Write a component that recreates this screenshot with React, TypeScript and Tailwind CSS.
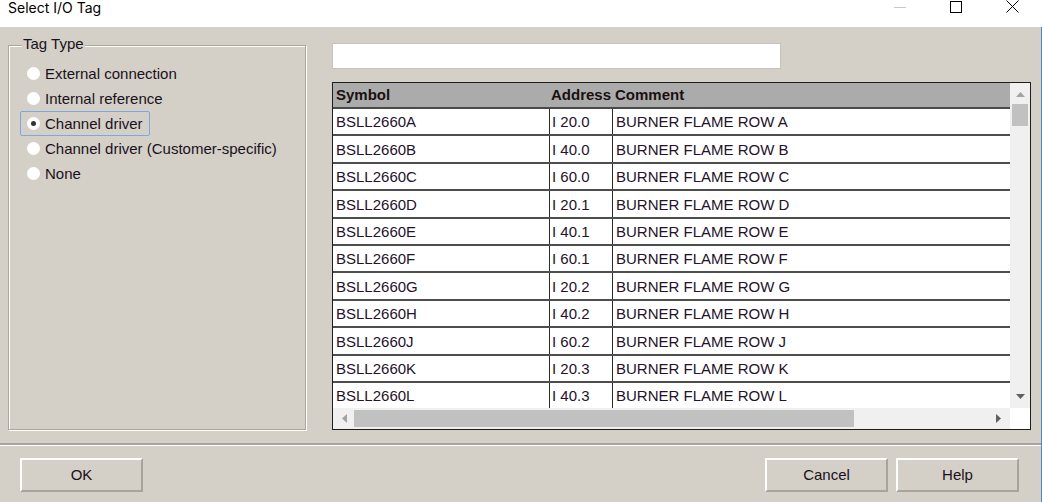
import React from "react";

const tagTypes = [
    "External connection",
    "Internal reference",
    "Channel driver",
    "Channel driver (Customer-specific)",
    "None",
];

const rows = [
    ["BSLL2660A", "I 20.0", "BURNER FLAME ROW A"],
    ["BSLL2660B", "I 40.0", "BURNER FLAME ROW B"],
    ["BSLL2660C", "I 60.0", "BURNER FLAME ROW C"],
    ["BSLL2660D", "I 20.1", "BURNER FLAME ROW D"],
    ["BSLL2660E", "I 40.1", "BURNER FLAME ROW E"],
    ["BSLL2660F", "I 60.1", "BURNER FLAME ROW F"],
    ["BSLL2660G", "I 20.2", "BURNER FLAME ROW G"],
    ["BSLL2660H", "I 40.2", "BURNER FLAME ROW H"],
    ["BSLL2660J", "I 60.2", "BURNER FLAME ROW J"],
    ["BSLL2660K", "I 20.3", "BURNER FLAME ROW K"],
    ["BSLL2660L", "I 40.3", "BURNER FLAME ROW L"],
];

const Button: React.FC<{ label: string }> = ({ label }) => (
    <button className="w-[123px] h-[34px] bg-[#d4d0c8] border-2 border-t-white border-l-white border-b-[#a8a49c] border-r-[#a8a49c] text-[15px] text-[#1a1020] flex items-center justify-center">
        {label}
    </button>
);

const App: React.FC = () => {
    const selected = 2;

    return (
        <div className="w-[1042px] h-[502px] overflow-hidden bg-white font-['Liberation_Sans',Arial,sans-serif]">

            {/* Title bar */}
            <div className="h-[27px] bg-white flex items-start">
                <span className="pl-[8px] text-[14px] leading-[16px] text-black font-['Inter',sans-serif]">Select I/O Tag</span>
                <div className="flex-1" />
                <div className="flex items-start pr-[2px]">
                    <div className="w-[56px] h-[13px] flex items-center justify-center">
                        <svg width="12" height="12" viewBox="0 0 12 12">
                            <line x1="0" y1="6.5" x2="12" y2="6.5" stroke="#c8c8c8" strokeWidth="1" />
                        </svg>
                    </div>
                    <div className="w-[56px] h-[13px] flex items-center justify-center">
                        <svg width="12" height="12" viewBox="0 0 12 12">
                            <rect x="0.5" y="0.5" width="11" height="11" fill="none" stroke="#000" strokeWidth="1" />
                        </svg>
                    </div>
                    <div className="w-[56px] h-[13px] flex items-center justify-center">
                        <svg width="13" height="13" viewBox="0 0 13 13">
                            <path d="M0.5 0.5 L12.5 12.5 M12.5 0.5 L0.5 12.5" stroke="#000" strokeWidth="1" />
                        </svg>
                    </div>
                </div>
            </div>

            {/* Body */}
            <div className="h-[475px] bg-[#d4d0c8] border-r border-[#4a8ac4] flex flex-col">

                <div className="flex h-[416px]">

                    {/* Tag Type group */}
                    <div className="relative ml-[8px] mt-[18px] w-[298px] h-[385px] border border-[#aca899] shadow-[1px_1px_0_#fff,inset_1px_1px_0_#fff]">
                        <span className="absolute left-[13px] top-[-11px] px-[1px] bg-[#d4d0c8] text-[15px] leading-[17px] text-[#1a1020]">Tag Type</span>

                        <div className="mt-[15px] ml-[11px] flex flex-col items-start">
                            {tagTypes.map((t, i) => (
                                <div
                                    key={t}
                                    className={
                                        i === selected
                                            ? "h-[25px] flex items-center gap-[5px] pl-[6px] pr-[6px] border border-[#7fa6df] rounded-[2px]"
                                            : "h-[25px] flex items-center gap-[5px] pl-[6px] pr-[6px] border border-transparent"
                                    }
                                >
                                    <span className="w-[13px] h-[13px] rounded-full bg-white flex items-center justify-center">
                                        {i === selected && <span className="w-[5px] h-[5px] rounded-full bg-[#333]" />}
                                    </span>
                                    <span className="text-[15px] text-[#1a1020] leading-[17px]">{t}</span>
                                </div>
                            ))}
                        </div>
                    </div>

                    {/* Right column */}
                    <div className="ml-[26px] mt-[16px] flex flex-col">
                        <div className="w-[449px] h-[26px] bg-white border border-[#c6c3bc]" />

                        {/* Table */}
                        <div className="mt-[13px] w-[699px] h-[348px] border border-[#1e1e1e] bg-white flex flex-col">
                            <div className="flex h-[325px]">
                                <div className="w-[677px] h-[325px] overflow-hidden flex flex-col">
                                    <div className="h-[26px] shrink-0 flex items-center bg-[#ababab] border-b-2 border-[#4a4a4a] text-[15px] font-bold text-[#1a1010]">
                                        <span className="w-[217px] pl-[3px]">Symbol</span>
                                        <span className="w-[63px] pl-[1px]">Address</span>
                                        <span className="pl-[2px]">Comment</span>
                                    </div>
                                    {rows.map((r) => (
                                        <div key={r[0]} className="h-[27.4px] shrink-0 flex border-b-2 border-[#4e4e4e] text-[15px] text-[#24122a]">
                                            <span className="w-[217px] pl-[3px] pt-[2px] border-r border-[#2a2a2a] flex items-center">{r[0]}</span>
                                            <span className="w-[63px] pl-[2px] pt-[2px] border-r border-[#2a2a2a] flex items-center">{r[1]}</span>
                                            <span className="flex-1 pl-[3px] pt-[2px] flex items-center">{r[2]}</span>
                                        </div>
                                    ))}
                                </div>

                                {/* Vertical scrollbar */}
                                <div className="w-[20px] h-[325px] bg-[#f0f0f0] flex flex-col items-center">
                                    <svg className="mt-[9px]" width="9" height="5" viewBox="0 0 9 5">
                                        <path d="M0 5 L4.5 0 L9 5 Z" fill="#a3a3a3" />
                                    </svg>
                                    <div className="mt-[7px] w-[16px] h-[22px] bg-[#c1c1c1]" />
                                    <div className="flex-1" />
                                    <svg className="mb-[9px]" width="9" height="5" viewBox="0 0 9 5">
                                        <path d="M0 0 L9 0 L4.5 5 Z" fill="#606060" />
                                    </svg>
                                </div>
                            </div>

                            {/* Horizontal scrollbar */}
                            <div className="flex h-[21px]">
                                <div className="w-[677px] h-[21px] bg-[#f0f0f0] flex items-center">
                                    <svg className="ml-[9px]" width="5" height="9" viewBox="0 0 5 9">
                                        <path d="M5 0 L0 4.5 L5 9 Z" fill="#a3a3a3" />
                                    </svg>
                                    <div className="ml-[7px] w-[500px] h-[17px] bg-[#c1c1c1]" />
                                    <div className="flex-1" />
                                    <svg className="mr-[9px]" width="5" height="9" viewBox="0 0 5 9">
                                        <path d="M0 0 L5 4.5 L0 9 Z" fill="#606060" />
                                    </svg>
                                </div>
                                <div className="w-[20px] h-[21px] bg-white" />
                            </div>
                        </div>
                    </div>
                </div>

                {/* Separator */}
                <div className="h-[2px] bg-[#a8a49c]" />
                <div className="h-[1px] bg-white" />

                {/* Buttons */}
                <div className="mt-[12px] pl-[20px] pr-[22px] flex">
                    <Button label="OK" />
                    <div className="flex-1" />
                    <div className="flex gap-[8px]">
                        <Button label="Cancel" />
                        <Button label="Help" />
                    </div>
                </div>

            </div>
        </div>
    );
};

export default App;
